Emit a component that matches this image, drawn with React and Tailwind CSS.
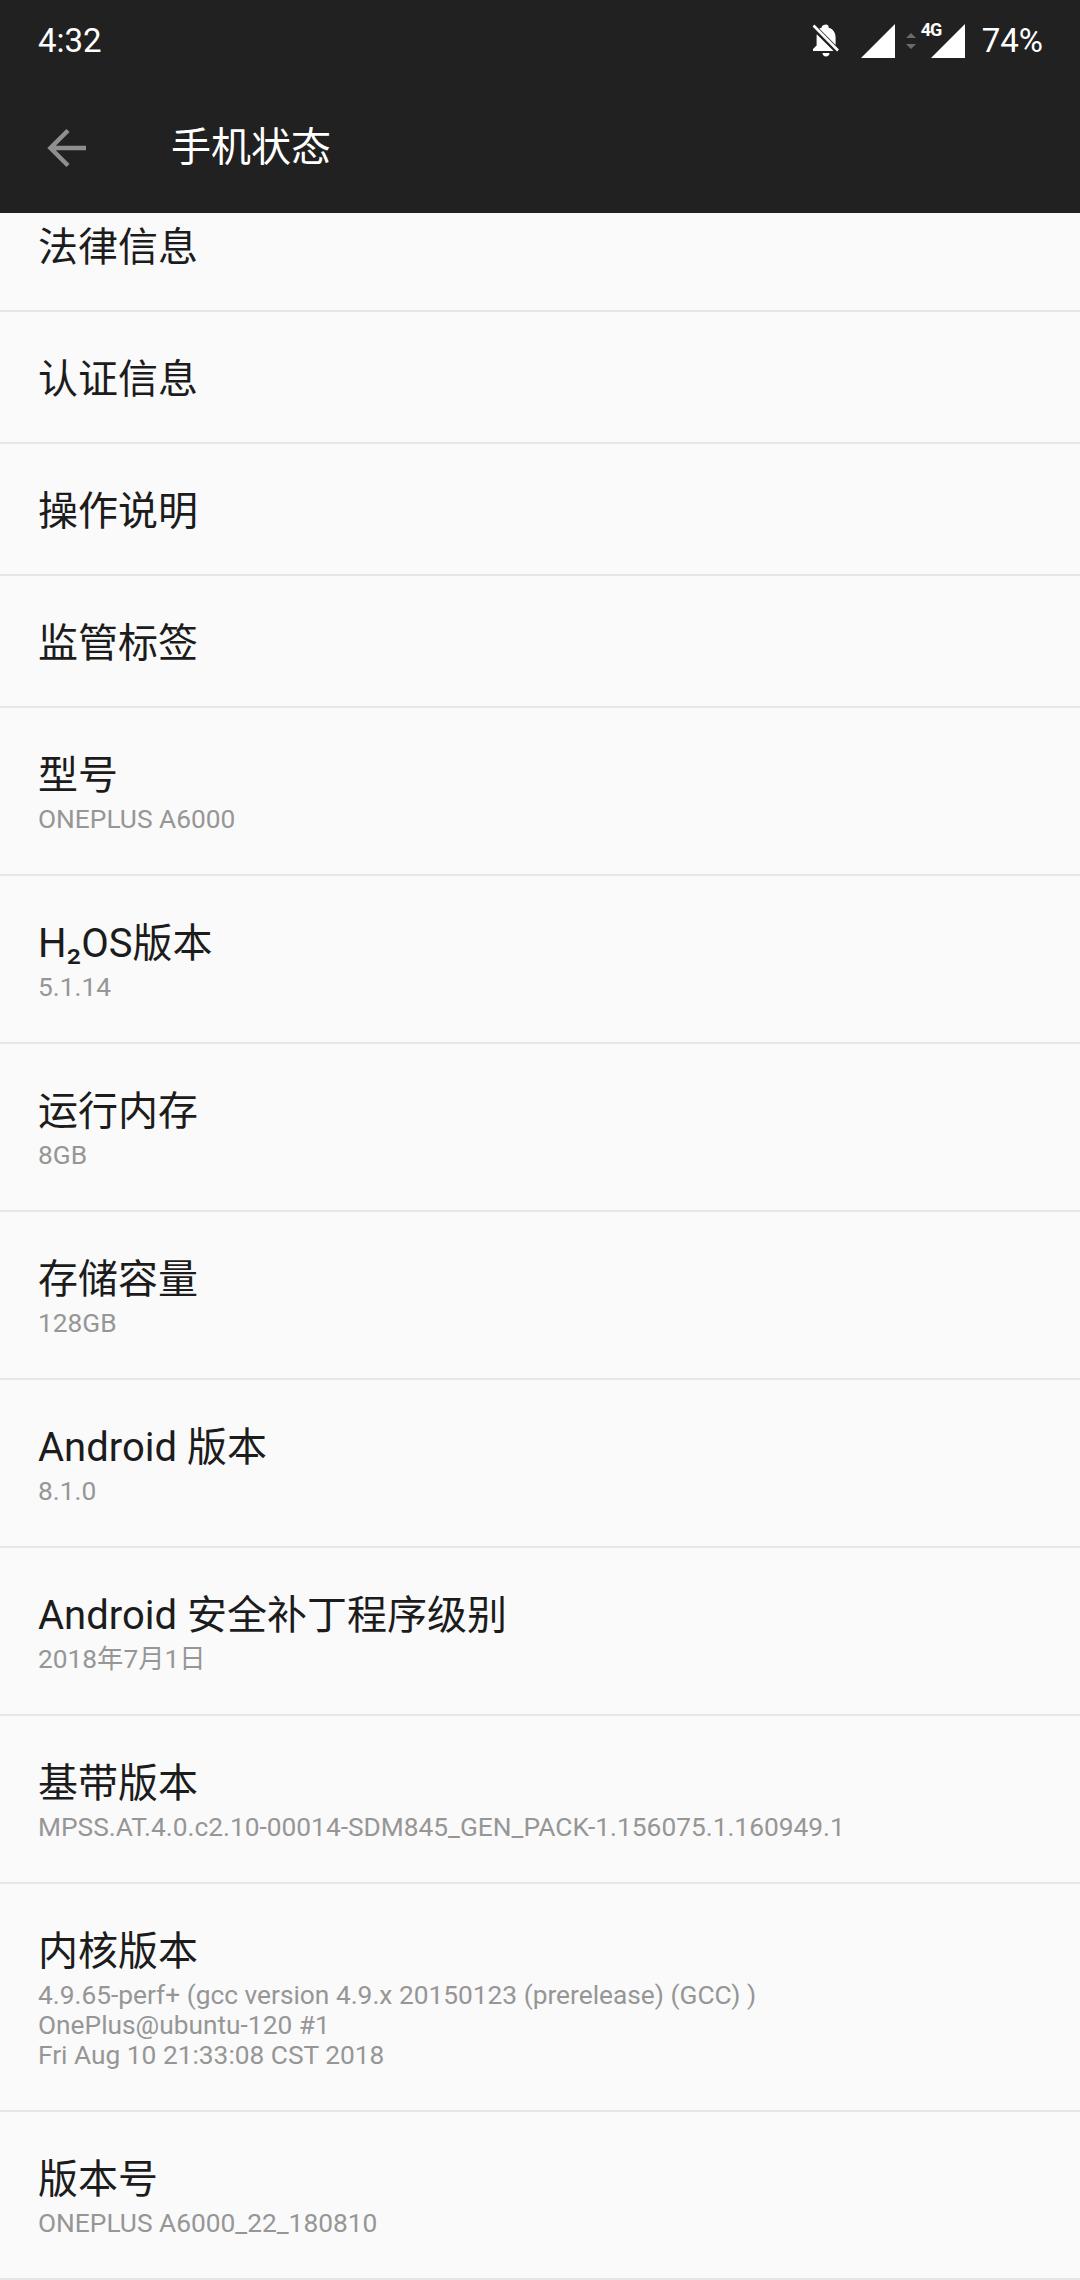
const FONT = "font-['Roboto','Noto_Sans_CJK_SC',sans-serif]";

const ROWS = [
  { title: "法律信息" },
  { title: "认证信息" },
  { title: "操作说明" },
  { title: "监管标签" },
  { title: "型号", lines: ["ONEPLUS A6000"] },
  { title: "H₂OS版本", lines: ["5.1.14"] },
  { title: "运行内存", lines: ["8GB"] },
  { title: "存储容量", lines: ["128GB"] },
  { title: "Android 版本", lines: ["8.1.0"] },
  { title: "Android 安全补丁程序级别", lines: ["2018年7月1日"] },
  { title: "基带版本", lines: ["MPSS.AT.4.0.c2.10-00014-SDM845_GEN_PACK-1.156075.1.160949.1"] },
  {
    title: "内核版本",
    lines: [
      "4.9.65-perf+ (gcc version 4.9.x 20150123 (prerelease) (GCC) )",
      "OnePlus@ubuntu-120 #1",
      "Fri Aug 10 21:33:08 CST 2018",
    ],
  },
  { title: "版本号", lines: ["ONEPLUS A6000_22_180810"] },
];

function BellOff() {
  return (
    <svg width="30" height="36" viewBox="0 0 30 36" fill="none">
      <path d="M15 1.5c1.6 0 2.6 1.1 2.6 2.6v.7c4.6 1.2 7 5 7 9.700v7.500L8.300 5.600c.9-.4 1.600-.7 2.400-.9v-.6C10.700 2.600 13.400 1.500 15 1.500z" fill="#fff" />
      <path d="M5.800 11.300 22.600 28H2v-2l3.600-3.400v-8c0-1.200 0-2.300.2-3.300z" fill="#fff" />
      <path d="M11.500 30h7c0 2-1.500 3.500-3.500 3.500s-3.500-1.500-3.500-3.500z" fill="#fff" />
      <path d="M2.500 2.500 27 27.500" stroke="#fff" strokeWidth="2.600" />
    </svg>
  );
}

function Signal() {
  return (
    <svg width="34" height="34" viewBox="0 0 34 34" className="block">
      <path d="M34 0v34H0z" fill="#fff" />
    </svg>
  );
}

function DataArrows() {
  return (
    <svg width="10" height="16" viewBox="0 0 10 16" className="block">
      <path d="M5 0l5 5H0zM5 16l5-5H0z" fill="#6b6b6b" />
    </svg>
  );
}

function BackArrow() {
  return (
    <svg width="40" height="40" viewBox="0 0 40 40" fill="none">
      <path d="M39 20H4M21 2.500 3.500 20 21 37.500" stroke="#8f8f8f" strokeWidth="4.500" />
    </svg>
  );
}

function Row({ title, lines }) {
  return (
    <div className={`flex flex-col px-[38px] border-b-2 border-[#e6e6e6] ${lines ? "pt-[43px] pb-[40px]" : "pt-[43px] pb-[37px]"}`}>
      <div className="text-[40px] leading-[50px] text-[#1c1c1c] whitespace-nowrap">{title}</div>
      {lines && (
        <div className="mt-[3px]">
          {lines.map((line) => (
            <div key={line} className="text-[26.3px] leading-[30px] text-[#969696] whitespace-nowrap">{line}</div>
          ))}
        </div>
      )}
    </div>
  );
}

export default function App() {
  return (
    <div className={`w-[1080px] h-[2280px] overflow-hidden bg-[#fafafa] ${FONT}`}>
      <header className="relative z-10 h-[213px] bg-[#212121] text-white">
        <div className="flex items-center justify-between h-[80px] pt-[2px] pl-[38px] pr-[37px]">
          <span className="text-[33px]">4:32</span>
          <div className="flex items-center">
            <BellOff />
            <div className="ml-[20px]"><Signal /></div>
            <div className="ml-[11px]"><DataArrows /></div>
            <div className="relative ml-[15px]">
              <Signal />
              <span className="absolute -left-[10px] -top-[3px] text-[18px] leading-[18px] font-bold tracking-[-1px]">4G</span>
            </div>
            <span className="ml-[17px] text-[33px]">74%</span>
          </div>
        </div>
        <div className="flex items-center h-[133px] pt-[2px] pl-[47px]">
          <BackArrow />
          <span className="ml-[84px] text-[40px] leading-[50px]">手机状态</span>
        </div>
      </header>
      <div className="-mt-[33px]">
        {ROWS.map((row) => (
          <Row key={row.title} title={row.title} lines={row.lines} />
        ))}
      </div>
    </div>
  );
}
